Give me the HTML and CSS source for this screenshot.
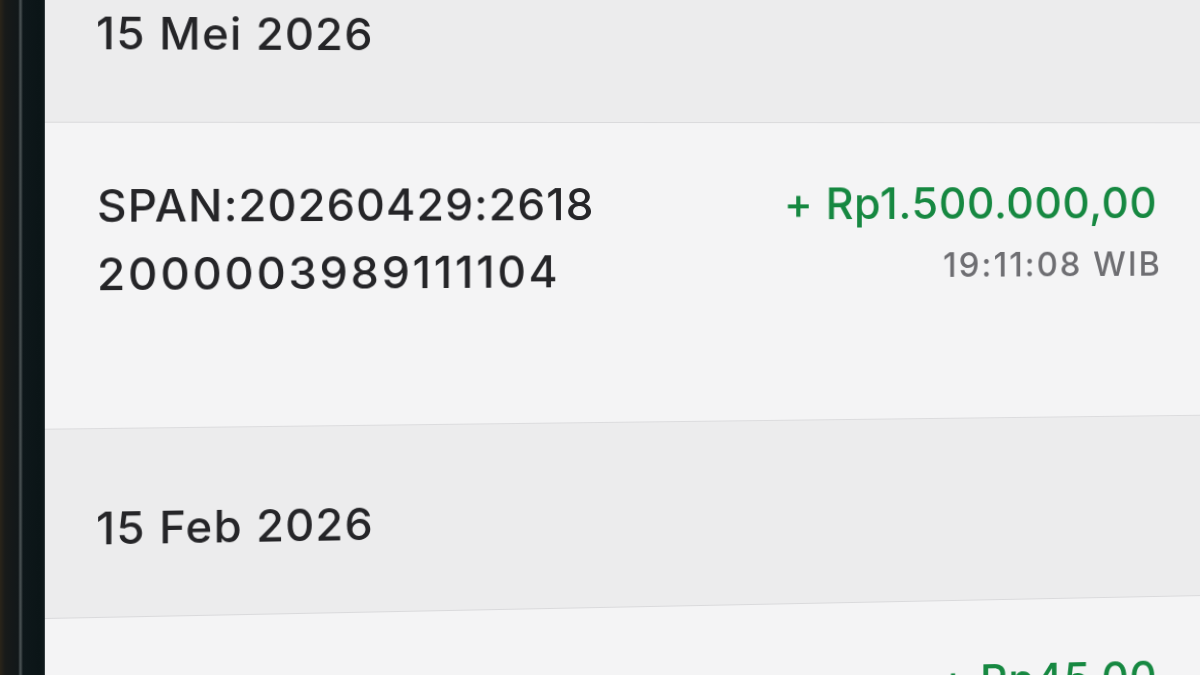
FILE: index.html
```html
<!DOCTYPE html>
<html lang="id">
<head>
<meta charset="utf-8">
<title>Mutasi Rekening</title>
<link rel="stylesheet" href="styles.css">
</head>
<body>
<div class="photo">
  <div class="device">
    <div class="bezel"></div>
    <div class="screen">
      <div class="list">
        <div class="date-header">15 Mei 2026</div>
        <div class="tx">
          <div class="tx-desc">
            <div class="tx-line">SPAN:20260429:2618</div>
            <div class="tx-line tx-line-num">2000003989111104</div>
          </div>
          <div class="tx-meta">
            <div class="tx-amount">+ Rp1.500.000,00</div>
            <div class="tx-time">19:11:08 WIB</div>
          </div>
        </div>
        <div class="date-header">15 Feb 2026</div>
        <div class="tx">
          <div class="tx-desc">
            <div class="tx-line">&nbsp;</div>
          </div>
          <div class="tx-meta">
            <div class="tx-amount">+ Rp45,00</div>
            <div class="tx-time">&nbsp;</div>
          </div>
        </div>
      </div>
    </div>
  </div>
</div>
</body>
</html>
```

FILE: styles.css
```css
html, body {
  margin: 0;
  padding: 0;
  width: 1200px;
  height: 675px;
  overflow: hidden;
  background: #0c1416;
}

.photo {
  width: 1200px;
  height: 675px;
  overflow: hidden;
}

/* The screen is photographed at a slight angle: right side recedes */
.device {
  display: flex;
  width: 1240px;
  height: 740px;
  margin-top: -20px;
  transform: perspective(1000px) rotateY(2.4deg);
  transform-origin: 600px 154px;
}

.bezel {
  flex: 0 0 57px;
  background: linear-gradient(90deg,
    #2b2419 0px, #2b2419 14px, #181a19 19px, #111719 32px,
    #4d5557 33px, #3a4244 34.5px, #0e171a 36px,
    #0b1517 52px, #101a1d 57px);
}

.screen {
  flex: 1;
  background: #f4f4f5;
  font-family: "Inter", "Liberation Sans", sans-serif;
  font-weight: 450;
  color: #252528;
  letter-spacing: 1.1px;
  overflow: hidden;
}

.list {
  margin-top: -42px;
}

.date-header {
  background: #ececed;
  font-size: 44px;
  line-height: 56px;
  letter-spacing: 1.2px;
  padding: 69px 0 59px 49px;
  border-bottom: 1.5px solid #dadadc;
}

.tx {
  display: flex;
  justify-content: space-between;
  align-items: flex-start;
  height: 299.5px;
  box-sizing: border-box;
  padding: 48px 69px 0 50px;
  background: #f4f4f5;
  border-bottom: 1.5px solid #dcdcde;
}

.tx-desc {
  font-size: 44px;
  line-height: 67px;
}

.tx-line-num {
  letter-spacing: 2.7px;
}

.tx-meta {
  display: flex;
  flex-direction: column;
  align-items: flex-end;
  margin-top: 5px;
}

.tx-amount {
  color: #168841;
  font-size: 44px;
  font-weight: 500;
  line-height: 56px;
  letter-spacing: 0.7px;
}

.tx-time {
  color: #6e6e72;
  font-size: 34px;
  line-height: 44px;
  letter-spacing: 2.1px;
  margin-top: 13px;
  margin-right: -5px;
}
```
